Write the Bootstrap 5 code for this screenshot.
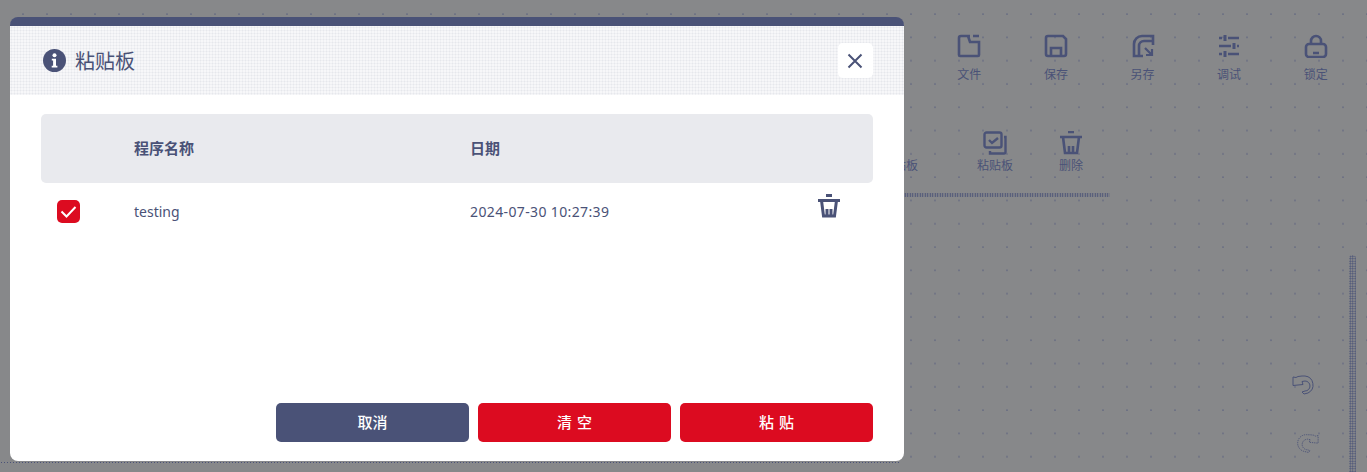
<!DOCTYPE html>
<html lang="zh">
<head>
<meta charset="utf-8">
<title>粘贴板</title>
<link href="https://cdn.jsdelivr.net/npm/bootstrap@5.3.0/dist/css/bootstrap.min.css" rel="stylesheet">
<style>
html,body{height:100%;overflow:hidden}
body{font-family:"Noto Sans","Noto Sans CJK SC",sans-serif;color:#4a5277;background:#87888a}
.stage{height:472px;position:relative;overflow:hidden;
  background-color:#87888a;
  background-image:radial-gradient(circle at 1px 1px,#555c7e .55px,transparent .8px);
  background-size:24px 23.3px;background-position:22px 13px}
.tool-row{height:93px;padding-top:34px;padding-right:8px}
.tool-row2{padding-top:38px;padding-left:882px;height:100px}
.tool{width:86.6px;font-size:12px;line-height:16px;color:#4a5277;font-family:"Noto Sans CJK SC",sans-serif}
.tool svg{display:block;margin-bottom:8px}
.tool-row2 .tool svg{margin-bottom:2px}
.tool-row2 .t-a{width:76px;margin-left:75px}
.tool-row2 .t-b{width:76px}
.tool-row2 .t-0{width:0;overflow:visible;white-space:nowrap}
.canvas-line{height:4px;width:206px;margin-left:904px;background-image:radial-gradient(circle,#4a5277 .8px,transparent 1px);background-size:2.500px 2px}
.v-scroll{position:absolute;left:1349px;top:255px;bottom:0;width:7px;border-radius:4px 4px 0 0;background-image:radial-gradient(circle,#4a5277 .75px,transparent 1px);background-size:2.500px 2.500px}
.hist{position:absolute}
.hist-u{top:372px;left:1291px}.hist-r{top:433px;left:1295px}
.bottom-dots{position:absolute;left:0;top:461px;width:900px;height:3px;background-image:radial-gradient(circle,#4a5277 .8px,transparent 1px);background-size:3px 3px}
.dlg-wrap{position:absolute;left:10px;top:17px;width:894px;height:444px}
.dlg{height:100%;background:#fff;border-radius:8px;overflow:hidden;border:0;border-top:9px solid #4a5277}
.dlg-head{height:69px;padding:0 31px 0 33px;
  background-color:#f7f7f9;
  background-image:radial-gradient(circle,#e6e7ec .9px,transparent 1.1px);background-size:3px 3px}
.dlg-title{font-size:20px;font-weight:400;color:#4a5277;margin:0 0 0 9px;line-height:1;font-family:"Noto Sans CJK SC",sans-serif}
.close-x{width:35px;height:35px;background:#fff;border:0;border-radius:5px;padding:0 2px 0 0}
.dlg-body{padding:19px 31px 0 31px;height:308px}
.grid-head{height:69px;background:#e9eaee;border-radius:5px;font-size:15px;font-weight:700;font-family:"Noto Sans CJK SC",sans-serif}
.col-check{width:93px}
.col-name{width:336px}
.col-date{width:347px}
.grid-row{height:58px;font-size:14px;color:#4a5277;padding-bottom:2px}
.date-val{letter-spacing:.37px}
.check-box{width:23px;height:23px;background:#dc0b20;border-radius:5px;margin-left:16px}
.trash-wrap{margin-top:-10px}
.dlg-foot{padding:0 31px 0 0;gap:9px}
.act{width:193px;height:39px;border:0;border-radius:5px;color:#fff;font-size:15px;font-weight:500;padding:0;font-family:"Noto Sans CJK SC",sans-serif}
.act-navy{background:#4a5277}.act-navy:hover{background:#4a5277;color:#fff}
.act-red{background:#dc0b20;letter-spacing:5px;padding-left:5px}.act-red:hover{background:#dc0b20;color:#fff}
</style>
</head>
<body>
<div class="stage">
  <div class="tool-row d-flex justify-content-end">
    <div class="tool d-flex flex-column align-items-center">
      <svg width="24" height="24" viewBox="0 0 24 24" fill="none" stroke="#4a5277" stroke-width="2.600"><path d="M13 2H4a2 2 0 0 0-2 2v17a1 1 0 0 0 1 1h18a1 1 0 0 0 1-1V8l-9 0-2-6M16 2h6"/></svg>文件</div>
    <div class="tool d-flex flex-column align-items-center">
      <svg width="24" height="24" viewBox="0 0 24 24" fill="none" stroke="#4a5277" stroke-width="2.600"><path d="M4 2h15l3 3v15a2 2 0 0 1-2 2H4a2 2 0 0 1-2-2V4a2 2 0 0 1 2-2zM7 22v-8h10v8"/></svg>保存</div>
    <div class="tool d-flex flex-column align-items-center">
      <svg width="24" height="24" viewBox="0 0 24 24" fill="none" stroke="#4a5277" stroke-width="2.600"><path d="M12 22H3V10a8 8 0 0 1 8-8h11v9M8 22V12a5 5 0 0 1 5-5h9"/><path d="M14 14l6 6M21 15v6h-6" stroke-width="2.200"/></svg>另存</div>
    <div class="tool d-flex flex-column align-items-center">
      <svg width="24" height="24" viewBox="0 0 24 24" fill="none" stroke="#4a5277" stroke-width="2.600"><path d="M2 4h3M11 4h11M2 12h12M20 12h2M2 20h3M11 20h11"/><path d="M8 1v6M17 9v6M8 17v6" stroke-width="3"/></svg>调试</div>
    <div class="tool d-flex flex-column align-items-center">
      <svg width="24" height="24" viewBox="0 0 24 24" fill="none" stroke="#4a5277" stroke-width="2.600"><rect x="2" y="10" width="20" height="13" rx="3"/><path d="M7 10V7a5 5 0 0 1 10 0v3M9 19h6"/></svg>锁定</div>
  </div>
  <div class="tool-row2 d-flex align-items-start">
    <div class="tool t-0 d-flex flex-column"><svg width="24" height="24" viewBox="0 0 24 24"></svg>粘贴板</div>
    <div class="tool t-a d-flex flex-column align-items-center">
      <svg width="24" height="24" viewBox="0 0 24 24" fill="none" stroke="#4a5277" stroke-width="2.400"><rect x="1.500" y="1.500" width="17" height="15" rx="2"/><path d="M21 6h1.500v15a1.500 1.500 0 0 1-1.500 1.500H7V20M6 9l3 3 6-5" /></svg>粘贴板</div>
    <div class="tool t-b d-flex flex-column align-items-center">
      <svg width="24" height="24" viewBox="0 0 24 24" fill="none" stroke="#4a5277" stroke-width="2.600"><path d="M1 6h22M9 1h6M4 6l2 16h12l2-16M10 22v-7M14 22v-7"/></svg>删除</div>
  </div>
  <div class="canvas-line"></div>
  <div class="v-scroll"></div>
  <svg class="hist hist-u" width="28" height="28" viewBox="0 0 28 28" fill="none" stroke="#4a5277"><path d="M2 5l3 .5 2-1 4-.5h3a9 9 0 0 1 3 17l-4 1-2-2 3-1a5 5 0 0 0 0-10l-3 .5 1 3-10 1z"/></svg>
  <svg class="hist hist-r" width="25" height="23" viewBox="0 0 28 26" fill="none" stroke="#4a5277" stroke-dasharray="1.500 1"><g transform="translate(28 0) scale(-1 1)"><path d="M2 3l3 .5 2-1 4-.5h3a9 9 0 0 1 3 19l-4 1-2-2 3-1a5 5 0 0 0 0-12l-3 .5 1 3-10 1z"/></g></svg>
  <div class="bottom-dots"></div>

  <div class="dlg-wrap" role="dialog" aria-modal="true">
    <div class="dlg d-flex flex-column">
      <div class="dlg-head d-flex align-items-center">
        <svg width="23" height="23" viewBox="0 0 23 23"><circle cx="11.500" cy="11.500" r="11.500" fill="#4a5277"/><circle cx="11.500" cy="6.300" r="2" fill="#fff"/><path d="M8.800 9.800h4.200v7h1.400v1.700H8.700v-1.700h1.400v-5.300H8.800z" fill="#fff"/></svg>
        <h5 class="dlg-title">粘贴板</h5>
        <button type="button" class="close-x ms-auto d-flex align-items-center justify-content-center" aria-label="关闭">
          <svg width="16" height="16" viewBox="0 0 16 16" stroke="#4a5277" stroke-width="2"><path d="M1.500 1.500l13 13M14.500 1.500l-13 13"/></svg>
        </button>
      </div>
      <div class="dlg-body">
        <div class="grid-head d-flex align-items-center">
          <div class="col-check"></div>
          <div class="col-name">程序名称</div>
          <div class="col-date">日期</div>
        </div>
        <div class="grid-row d-flex align-items-center">
          <div class="col-check"><div class="check-box d-flex align-items-center justify-content-center">
            <svg width="17" height="13" viewBox="0 0 17 13" fill="none" stroke="#fff" stroke-width="2"><path d="M1.500 6.500l5 5 9-9.500"/></svg>
          </div></div>
          <div class="col-name">testing</div>
          <div class="col-date date-val">2024-07-30 10:27:39</div>
          <div class="trash-wrap">
            <svg width="24" height="24" viewBox="0 0 24 24" fill="none" stroke="#4a5277" stroke-width="3"><path d="M1 6.500h22M9 1.500h6M4.500 6.500l2 15.500h11l2-15.500M10 22v-7M14 22v-7"/></svg>
          </div>
        </div>
      </div>
      <div class="dlg-foot d-flex justify-content-end">
        <button type="button" class="btn act act-navy">取消</button>
        <button type="button" class="btn act act-red">清空</button>
        <button type="button" class="btn act act-red">粘贴</button>
      </div>
    </div>
  </div>
</div>
<script src="https://cdn.jsdelivr.net/npm/bootstrap@5.3.0/dist/js/bootstrap.bundle.min.js"></script>
</body>
</html>
